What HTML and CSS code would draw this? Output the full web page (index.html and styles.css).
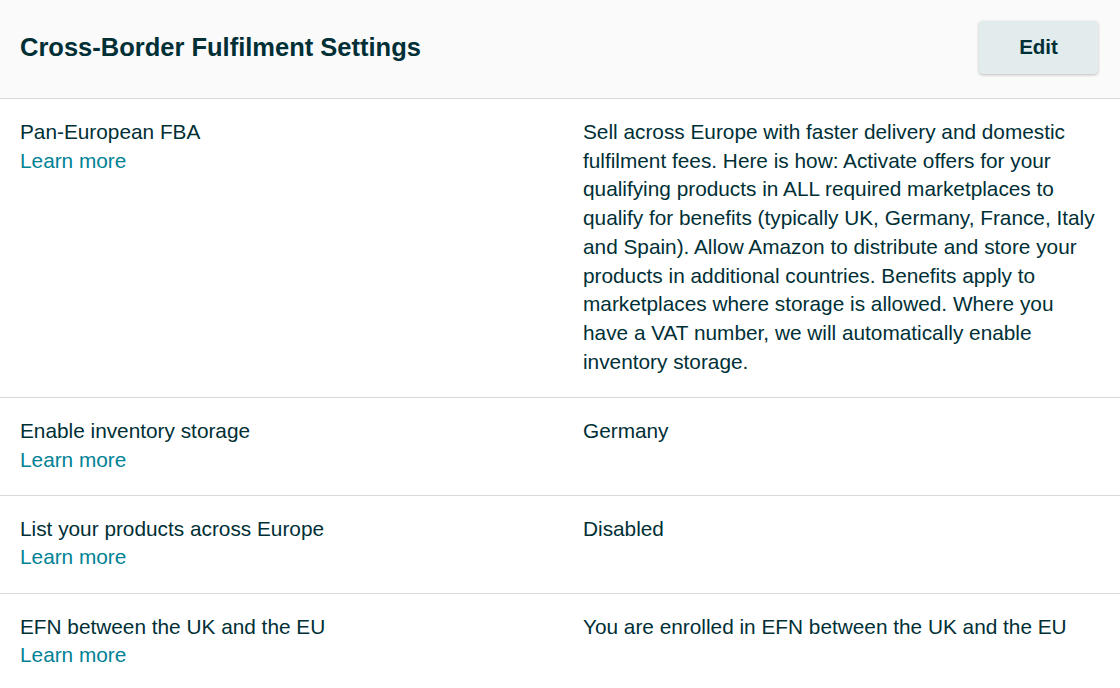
FILE: index.html
```
<!DOCTYPE html>
<html>
<head>
<meta charset="utf-8">
<link rel="stylesheet" href="styles.css">
</head>
<body>
<div class="card">
  <div class="card-header">
    <h1 class="title">Cross-Border Fulfilment Settings</h1>
    <button class="btn-edit">Edit</button>
  </div>
  <div class="row">
    <div class="label">Pan-European FBA<br><a class="link" href="#">Learn more</a></div>
    <div class="value">Sell across Europe with faster delivery and domestic fulfilment fees. Here is how: Activate offers for your qualifying products in ALL required marketplaces to qualify for benefits (typically UK, Germany, France, Italy and Spain). Allow Amazon to distribute and store your products in additional countries. Benefits apply to marketplaces where storage is allowed. Where you have a VAT number, we will automatically enable inventory storage.</div>
  </div>
  <div class="row">
    <div class="label">Enable inventory storage<br><a class="link" href="#">Learn more</a></div>
    <div class="value">Germany</div>
  </div>
  <div class="row">
    <div class="label">List your products across Europe<br><a class="link" href="#">Learn more</a></div>
    <div class="value">Disabled</div>
  </div>
  <div class="row">
    <div class="label">EFN between the UK and the EU<br><a class="link" href="#">Learn more</a></div>
    <div class="value">You are enrolled in EFN between the UK and the EU</div>
  </div>
</div>
</body>
</html>
```

FILE: styles.css
```
html, body {
  margin: 0;
  padding: 0;
  background: #ffffff;
}
body {
  font-family: "Liberation Sans", Arial, sans-serif;
  color: #002f36;
  font-size: 20.8px;
  line-height: 28.7px;
}
.card-header {
  height: 99px;
  box-sizing: border-box;
  background: #fafafa;
  border-bottom: 1px solid #d5dbdb;
  display: flex;
  align-items: center;
  justify-content: space-between;
  padding: 0 22px 0 20px;
}
.title {
  margin: 0;
  font-size: 25.5px;
  font-weight: bold;
  color: #002f36;
  line-height: 30px;
  margin-top: -4px;
}
.btn-edit {
  width: 119px;
  height: 53px;
  margin-top: -4px;
  background: #e3ecec;
  border: none;
  border-radius: 4px;
  box-shadow: 0 1px 3px rgba(0, 0, 0, 0.25);
  font-family: "Liberation Sans", Arial, sans-serif;
  font-size: 20.5px;
  font-weight: bold;
  color: #002f36;
}
.row {
  display: grid;
  grid-template-columns: 563px 1fr;
  padding: 19px 20px 20.5px 20px;
  border-bottom: 1px solid #d5dbdb;
}
.row:last-child {
  border-bottom: none;
}
.link {
  color: #008296;
  text-decoration: none;
}
```
